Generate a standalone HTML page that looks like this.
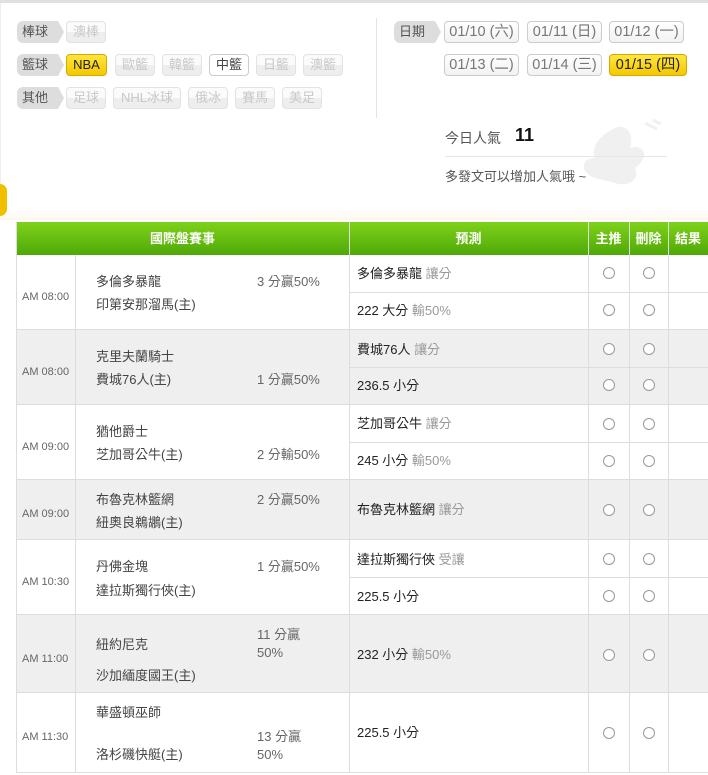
<!DOCTYPE html>
<html><head><meta charset="utf-8"><style>
*{margin:0;padding:0;box-sizing:border-box}
body{width:708px;height:775px;overflow:hidden;background:#fff;font-family:"Liberation Sans","Noto Sans CJK TC",sans-serif;position:relative;color:#333;font-size:13px}
.a{position:absolute;white-space:nowrap}
.lab{position:absolute;height:22px;line-height:22px;width:41px;background:#ddd;border-radius:6px 0 0 6px;color:#555;font-size:13px;padding-left:5px}
.lab:after{content:"";position:absolute;right:-6px;top:0;border-left:6px solid #ddd;border-top:11px solid transparent;border-bottom:11px solid transparent}
.b{position:absolute;height:22px;line-height:20px;border:1px solid #e2e2e2;border-radius:4px;background:linear-gradient(#fbfbfb 50%,#eee 50%);color:#c8c8c8;font-size:13px;text-align:center}
.b.on{color:#444;background:#fff;border-color:#ccc}
.b.y{background:linear-gradient(#ffe640,#f5c800);border-color:#d8a800;color:#222}
.d{position:absolute;height:22px;line-height:20px;border:1px solid #ccc;border-radius:4px;background:linear-gradient(#fff,#f2f2f2);color:#777;font-size:14.5px;text-align:center}
.d.y{background:linear-gradient(#ffe640,#f5c800);border-color:#d8a800;color:#222}
.row{position:absolute;left:16px;width:700px;border-bottom:1px solid #ddd}
.v{position:absolute;top:222px;height:551px;width:1px;background:#ddd}
.t{position:absolute;left:22px;font-size:11px;color:#666;line-height:14px}
.tx{position:absolute;line-height:18px;font-size:13px;color:#444}
.g{color:#999}
.c{position:absolute;width:12px;height:12px;border:1px solid #999;border-radius:50%;background:#fff}
.h{position:absolute;top:222px;height:33px;line-height:33px;color:#fff;font-weight:bold;font-size:13px;text-align:center}
</style></head><body>
<div class="a" style="left:0;top:0;width:708px;height:3px;background:#e0e0e0"></div>
<div class="a" style="left:0;top:3px;width:708px;height:214px;background:#fff;border-left:1px solid #eee"></div>
<div class="a" style="left:0;top:210px;width:708px;height:10px;background:linear-gradient(#fff,#fdf8ee)"></div>
<div class="a" style="left:0;top:184px;width:7px;height:32px;background:#f0c000;border-radius:0 16px 16px 0"></div>

<div class="lab" style="left:17px;top:21px">棒球</div>
<div class="b" style="left:66px;top:21px;width:40px">澳棒</div>
<div class="lab" style="left:17px;top:54px">籃球</div>
<div class="b y" style="left:66px;top:54px;width:41px">NBA</div>
<div class="b" style="left:115px;top:54px;width:40px">歐籃</div>
<div class="b" style="left:162px;top:54px;width:40px">韓籃</div>
<div class="b on" style="left:209px;top:54px;width:40px">中籃</div>
<div class="b" style="left:256px;top:54px;width:40px">日籃</div>
<div class="b" style="left:303px;top:54px;width:40px">澳籃</div>
<div class="lab" style="left:17px;top:87px">其他</div>
<div class="b" style="left:66px;top:87px;width:40px">足球</div>
<div class="b" style="left:113px;top:87px;width:68px">NHL冰球</div>
<div class="b" style="left:188px;top:87px;width:40px">俄冰</div>
<div class="b" style="left:235px;top:87px;width:40px">賽馬</div>
<div class="b" style="left:282px;top:87px;width:40px">美足</div>

<div class="a" style="left:376px;top:18px;width:1px;height:100px;background:#e4e4e4"></div>
<div class="lab" style="left:394px;top:21px">日期</div>
<div class="d" style="left:444px;top:21px;width:75px">01/10 (六)</div>
<div class="d" style="left:527px;top:21px;width:75px">01/11 (日)</div>
<div class="d" style="left:609px;top:21px;width:75px">01/12 (一)</div>
<div class="d" style="left:444px;top:54px;width:75px">01/13 (二)</div>
<div class="d" style="left:527px;top:54px;width:75px">01/14 (三)</div>
<div class="d y" style="left:609px;top:54px;width:78px">01/15 (四)</div>

<div class="a" style="left:575px;top:118px;width:90px;height:75px;opacity:.09">
<svg width="90" height="75"><path d="M40 10 C50 5 60 15 55 30 C70 25 75 40 60 50 C65 60 55 70 40 65 L20 60 C5 55 5 40 20 40 C15 25 30 15 40 10Z" fill="#666"/><path d="M70 5 l12 6 M78 2 l8 4" stroke="#666" stroke-width="3"/></svg></div>
<div class="a" style="left:445px;top:128px;font-size:14px;color:#555">今日人氣</div>
<div class="a" style="left:515px;top:125px;font-size:18px;font-weight:bold;color:#111">11</div>
<div class="a" style="left:445px;top:156px;width:222px;height:1px;background:#e6e6e6"></div>
<div class="a" style="left:445px;top:166px;font-size:13px;color:#555">多發文可以增加人氣哦 ~</div>

<div class="a" style="left:16px;top:222px;width:700px;height:33px;background:linear-gradient(#7fd21a,#4fa808)"></div>
<div class="h" style="left:16px;width:333px">國際盤賽事</div>
<div class="h" style="left:349px;width:239px">預測</div>
<div class="h" style="left:588px;width:41px">主推</div>
<div class="h" style="left:629px;width:39px">刪除</div>
<div class="h" style="left:668px;width:40px">結果</div>

<div class="row" style="top:255px;height:75px;background:#fff"></div>
<div class="row" style="top:330px;height:75px;background:#efefef"></div>
<div class="row" style="top:405px;height:75px;background:#fff"></div>
<div class="row" style="top:480px;height:60px;background:#efefef"></div>
<div class="row" style="top:540px;height:75px;background:#fff"></div>
<div class="row" style="top:615px;height:78px;background:#efefef"></div>
<div class="row" style="top:693px;height:80px;background:#fff"></div>
<div class="a" style="left:349px;top:292px;width:360px;height:1px;background:#ddd"></div>
<div class="a" style="left:349px;top:367px;width:360px;height:1px;background:#ddd"></div>
<div class="a" style="left:349px;top:442px;width:360px;height:1px;background:#ddd"></div>
<div class="a" style="left:349px;top:577px;width:360px;height:1px;background:#ddd"></div>

<div class="v" style="left:16px"></div>
<div class="v" style="left:75px;top:255px;height:518px"></div>
<div class="v" style="left:349px"></div>
<div class="v" style="left:588px"></div>
<div class="v" style="left:629px"></div>
<div class="v" style="left:668px"></div>

<div class="t" style="top:290px">AM 08:00</div>
<div class="t" style="top:365px">AM 08:00</div>
<div class="t" style="top:440px">AM 09:00</div>
<div class="t" style="top:507px">AM 09:00</div>
<div class="t" style="top:575px">AM 10:30</div>
<div class="t" style="top:652px">AM 11:00</div>
<div class="t" style="top:730px">AM 11:30</div>

<div class="tx" style="left:96px;top:273px">多倫多暴龍</div><div class="tx" style="left:96px;top:296px">印第安那溜馬(主)</div><div class="tx" style="left:257px;top:273px;color:#666">3 分贏50%</div>
<div class="tx" style="left:96px;top:348px">克里夫蘭騎士</div><div class="tx" style="left:96px;top:371px">費城76人(主)</div><div class="tx" style="left:257px;top:371px;color:#666">1 分贏50%</div>
<div class="tx" style="left:96px;top:423px">猶他爵士</div><div class="tx" style="left:96px;top:446px">芝加哥公牛(主)</div><div class="tx" style="left:257px;top:446px;color:#666">2 分輸50%</div>
<div class="tx" style="left:96px;top:491px">布魯克林籃網</div><div class="tx" style="left:96px;top:514px">紐奧良鵜鶘(主)</div><div class="tx" style="left:257px;top:491px;color:#666">2 分贏50%</div>
<div class="tx" style="left:96px;top:558px">丹佛金塊</div><div class="tx" style="left:96px;top:582px">達拉斯獨行俠(主)</div><div class="tx" style="left:257px;top:558px;color:#666">1 分贏50%</div>
<div class="tx" style="left:96px;top:636px">紐約尼克</div><div class="tx" style="left:96px;top:667px">沙加緬度國王(主)</div><div class="tx" style="left:257px;top:626px;color:#666;line-height:18px">11 分贏<br>50%</div>
<div class="tx" style="left:96px;top:704px">華盛頓巫師</div><div class="tx" style="left:96px;top:746px">洛杉磯快艇(主)</div><div class="tx" style="left:257px;top:728px;color:#666;line-height:18px">13 分贏<br>50%</div>

<div class="tx" style="left:357px;top:265px;color:#222">多倫多暴龍 <span class="g">讓分</span></div>
<div class="tx" style="left:357px;top:302px;color:#222">222 大分 <span class="g">輸50%</span></div>
<div class="tx" style="left:357px;top:341px;color:#222">費城76人 <span class="g">讓分</span></div>
<div class="tx" style="left:357px;top:377px;color:#222">236.5 小分</div>
<div class="tx" style="left:357px;top:415px;color:#222">芝加哥公牛 <span class="g">讓分</span></div>
<div class="tx" style="left:357px;top:452px;color:#222">245 小分 <span class="g">輸50%</span></div>
<div class="tx" style="left:357px;top:501px;color:#222">布魯克林籃網 <span class="g">讓分</span></div>
<div class="tx" style="left:357px;top:551px;color:#222">達拉斯獨行俠 <span class="g">受讓</span></div>
<div class="tx" style="left:357px;top:588px;color:#222">225.5 小分</div>
<div class="tx" style="left:357px;top:646px;color:#222">232 小分 <span class="g">輸50%</span></div>
<div class="tx" style="left:357px;top:724px;color:#222">225.5 小分</div>

<div class="c" style="left:603px;top:267px"></div><div class="c" style="left:643px;top:267px"></div>
<div class="c" style="left:603px;top:304px"></div><div class="c" style="left:643px;top:304px"></div>
<div class="c" style="left:603px;top:343px"></div><div class="c" style="left:643px;top:343px"></div>
<div class="c" style="left:603px;top:379px"></div><div class="c" style="left:643px;top:379px"></div>
<div class="c" style="left:603px;top:418px"></div><div class="c" style="left:643px;top:418px"></div>
<div class="c" style="left:603px;top:455px"></div><div class="c" style="left:643px;top:455px"></div>
<div class="c" style="left:603px;top:504px"></div><div class="c" style="left:643px;top:504px"></div>
<div class="c" style="left:603px;top:553px"></div><div class="c" style="left:643px;top:553px"></div>
<div class="c" style="left:603px;top:590px"></div><div class="c" style="left:643px;top:590px"></div>
<div class="c" style="left:603px;top:649px"></div><div class="c" style="left:643px;top:649px"></div>
<div class="c" style="left:603px;top:727px"></div><div class="c" style="left:643px;top:727px"></div>
</body></html>
